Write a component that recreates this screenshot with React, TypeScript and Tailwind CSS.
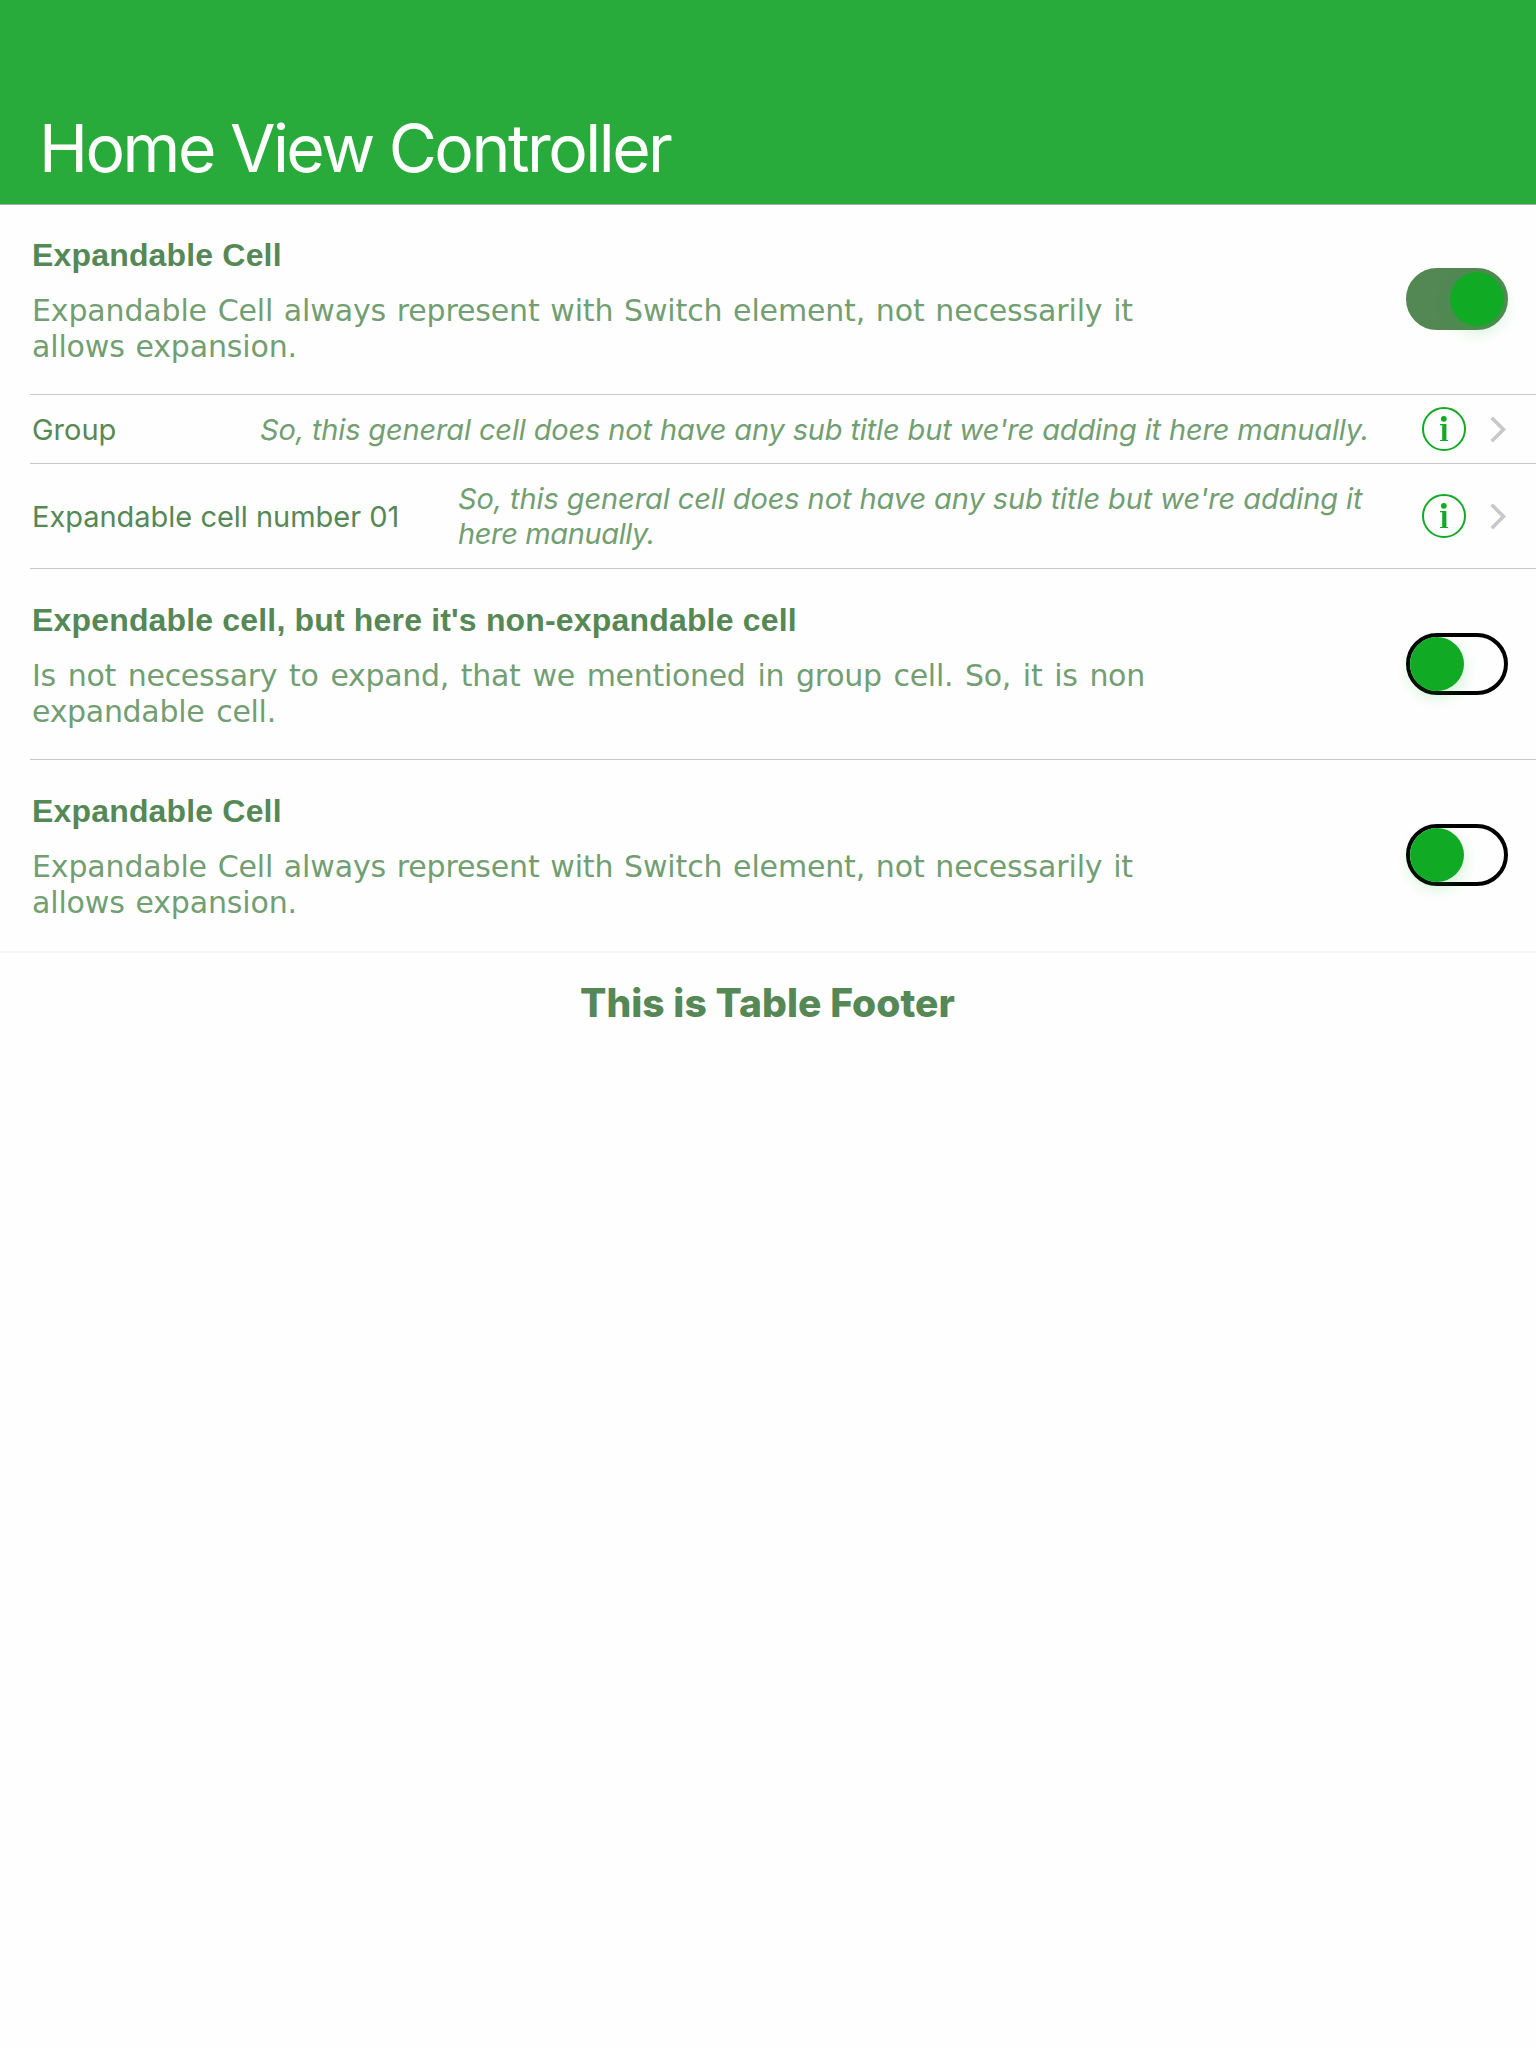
import React from "react";

function Toggle({ on = false }: { on?: boolean }) {
  return (
    <button
      role="switch"
      aria-checked={on}
      className={
        "flex h-[62px] w-[102px] shrink-0 items-center rounded-full border-4 " +
        (on ? "justify-end border-[#538754] bg-[#538754]" : "justify-start border-black bg-transparent")
      }
    >
      <span className="size-[54px] rounded-full bg-[#10aa25] shadow-[0_6px_16px_rgba(16,190,45,0.2)]" />
    </button>
  );
}

function InfoIcon() {
  return (
    <svg className="size-11 shrink-0" viewBox="0 0 44 44" fill="none">
      <circle cx="22" cy="22" r="21" stroke="#10aa25" strokeWidth="2" />
      <circle cx="21.8" cy="11.8" r="2.9" fill="#10aa25" />
      <path d="M18 17H24.4V32.9H26V34H18V32.9H20.2V18.2H18Z" fill="#10aa25" />
    </svg>
  );
}

function Chevron() {
  return (
    <svg className="ml-6 h-[27px] w-4 shrink-0" viewBox="0 0 16 27" fill="none">
      <path d="M1.7 1.7L13.5 13.5L1.7 25.3" stroke="#c7c7cc" strokeWidth="3.6" />
    </svg>
  );
}

type SwitchRowProps = { title: string; lines: string[]; on?: boolean; textClass: string; last?: boolean };

function SwitchRow({ title, lines, on, textClass, last }: SwitchRowProps) {
  return (
    <div className={last ? "" : "pl-[30px]"}>
      <div
        className={
          "flex items-center justify-between pr-7 " +
          (last
            ? "h-[193px] border-b-2 border-[#f6f6f6] pb-px pl-8"
            : "border-b border-[#c8c7cc] pl-0.5 " + (on ? "h-[190px] pb-px" : "h-[191px]"))
        }
      >
        <div className="pt-0.5 whitespace-nowrap">
          <h2 className="font-['Liberation_Sans'] text-[32px] leading-[38px] font-bold tracking-[0.17px] text-[#568856]">{title}</h2>
          <p className={"mt-[19px] font-['DejaVu_Sans'] text-[30px] leading-[36px] text-[#729e72] " + textClass}>
            {lines.map((l) => (
              <span key={l} className="block">{l}</span>
            ))}
          </p>
        </div>
        <Toggle on={on} />
      </div>
    </div>
  );
}

type Line = { text: string; tracking: string };
type DetailRowProps = { label: string; lines: Line[]; rowClass: string; labelClass: string };

function DetailRow({ label, lines, rowClass, labelClass }: DetailRowProps) {
  return (
    <div className="pl-[30px]">
      <div className={"flex items-center border-b border-[#c8c7cc] pr-[30px] pl-[2px] font-['Inter'] text-[29px] leading-[35px] whitespace-nowrap " + rowClass}>
        <span className={"tracking-[-0.02px] text-[#568856] " + labelClass}>{label}</span>
        <span className="flex-1 text-[#729e72] italic">
          {lines.map((l) => (
            <span key={l.text} className={"block " + l.tracking}>{l.text}</span>
          ))}
        </span>
        <InfoIcon />
        <Chevron />
      </div>
    </div>
  );
}

const expandableLines = [
  "Expandable Cell always represent with Switch element, not necessarily it",
  "allows expansion.",
];

export default function App() {
  return (
    <div className="min-h-[2048px] w-full overflow-hidden bg-[#fefefe]">
      <header className="flex h-[205px] items-end border-b border-[#a5aea6] bg-[#28ab3b] pb-[16px] pl-[39px]">
        <h1 className="font-['Inter'] text-[66px] leading-[80px] tracking-[-2.52px] whitespace-nowrap text-white">Home View Controller</h1>
      </header>
      <main>
        <SwitchRow on title="Expandable Cell" lines={expandableLines} textClass="tracking-[-0.15px] [word-spacing:1.35px]" />
        <DetailRow
          label="Group"
          lines={[
            {
              text: "So, this general cell does not have any sub title but we're adding it here manually.",
              tracking: "tracking-[-0.145px]",
            },
          ]}
          rowClass="h-[69px]"
          labelClass="w-[228px]"
        />
        <DetailRow
          label="Expandable cell number 01"
          lines={[
            { text: "So, this general cell does not have any sub title but we're adding it", tracking: "tracking-[-0.095px]" },
            { text: "here manually.", tracking: "tracking-[-0.38px]" },
          ]}
          rowClass="h-[105px]"
          labelClass="w-[426px]"
        />
        <SwitchRow
          title="Expendable cell, but here it's non-expandable cell"
          lines={["Is not necessary to expand, that we mentioned in group cell. So, it is non", "expandable cell."]}
          textClass="tracking-[-0.3px] [word-spacing:2.6px]"
        />
        <SwitchRow last title="Expandable Cell" lines={expandableLines} textClass="tracking-[-0.15px] [word-spacing:1.35px]" />
      </main>
      <footer className="pt-[26px] pr-px text-center font-['Inter'] text-[39px] leading-[48px] font-extrabold tracking-[0.06px] text-[#568856]">
        This is Table Footer
      </footer>
    </div>
  );
}
